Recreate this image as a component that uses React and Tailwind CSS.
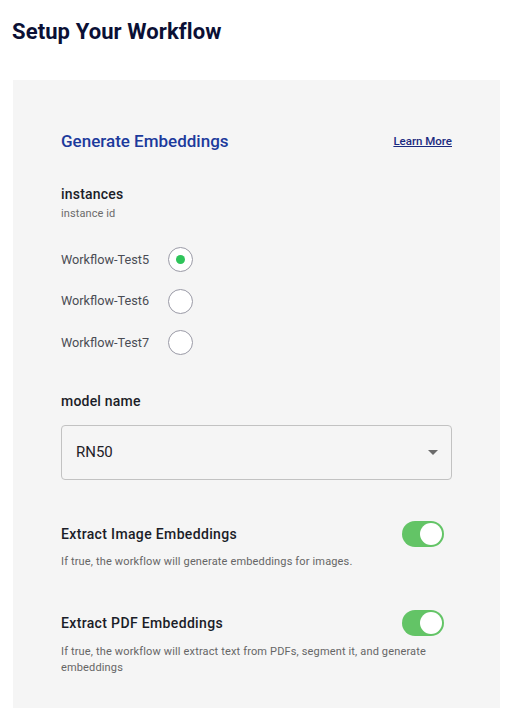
import React, { useState } from 'react';

const Radio = ({ checked, onClick }) => (
  <button
    onClick={onClick}
    className="w-[25px] h-[25px] rounded-full bg-white border-[1.5px] border-[#9a9aa6] flex items-center justify-center"
  >
    {checked && <span className="w-[9px] h-[9px] rounded-full bg-[#2ec45a]" />}
  </button>
);

const Toggle = ({ on, onClick }) => (
  <button
    onClick={onClick}
    className={`w-[42px] h-[26px] rounded-full flex items-center p-[2px] mr-2 ${on ? 'bg-[#63c466] justify-end' : 'bg-gray-300 justify-start'}`}
  >
    <span className="w-[22px] h-[22px] rounded-full bg-white" />
  </button>
);

const App = () => {
  const [instance, setInstance] = useState('Workflow-Test5');
  const [imageEmb, setImageEmb] = useState(true);
  const [pdfEmb, setPdfEmb] = useState(true);

  return (
    <div className="min-h-screen bg-white font-['Roboto',sans-serif] pl-3 pt-[19px]">
      {/* Title */}
      <h1 className="text-[22px] leading-[26px] font-bold tracking-[0.1px] text-[#0b1035]">Setup Your Workflow</h1>

      {/* Panel */}
      <div className="mt-[35px] w-[487px] min-h-[628px] bg-[#f5f5f5] pt-[50px] px-12 ml-[1px]">
        <div className="flex items-center justify-between h-6">
          <h2 className="text-[17px] font-medium text-[#1c3a9c]">Generate Embeddings</h2>
          <a href="#" className="text-[11.5px] font-medium text-[#1a2a80] underline">Learn More</a>
        </div>

        {/* instances */}
        <div className="mt-[30px] text-[14px] leading-5 font-medium tracking-[0.2px] text-[#1b1d28]">instances</div>
        <div className="mt-[2px] text-[11px] leading-4 tracking-[0.1px] text-[#6b6b6b]">instance id</div>

        <div className="mt-[25px] flex flex-col gap-[16.5px]">
          {['Workflow-Test5', 'Workflow-Test6', 'Workflow-Test7'].map(name => (
            <div key={name} className="flex items-center h-[25px]">
              <span className="w-[107px] text-[12.7px] text-[#4a4c54]">{name}</span>
              <Radio checked={instance === name} onClick={() => setInstance(name)} />
            </div>
          ))}
        </div>

        {/* model name */}
        <div className="mt-[36px] text-[14px] leading-5 font-medium tracking-[0.2px] text-[#1b1d28]">model name</div>
        <div className="mt-[14px] h-[55px] border border-[#c2c2c2] rounded-[4px] flex items-center justify-between pl-[14px] pr-[13px]">
          <span className="text-[15px] text-[#1f2128]">RN50</span>
          <svg width="10" height="5" viewBox="0 0 10 5">
            <path d="M0 0 L10 0 L5 5 Z" fill="#6b6b6b" />
          </svg>
        </div>

        {/* toggles */}
        <div className="mt-[41px] flex items-center justify-between h-[26px]">
          <span className="text-[14px] font-medium tracking-[0.35px] text-[#1b1d28]">Extract Image Embeddings</span>
          <Toggle on={imageEmb} onClick={() => setImageEmb(!imageEmb)} />
        </div>
        <p className="mt-[7px] text-[11px] leading-4 tracking-[0.15px] text-[#666]">
          If true, the workflow will generate embeddings for images.
        </p>

        <div className="mt-[40px] flex items-center justify-between h-[26px]">
          <span className="text-[14px] font-medium tracking-[0.35px] text-[#1b1d28]">Extract PDF Embeddings</span>
          <Toggle on={pdfEmb} onClick={() => setPdfEmb(!pdfEmb)} />
        </div>
        <p className="mt-[8px] text-[11px] leading-4 tracking-[0.15px] text-[#666]">
          If true, the workflow will extract text from PDFs, segment it, and generate embeddings
        </p>
      </div>
    </div>
  );
};

export default App;
